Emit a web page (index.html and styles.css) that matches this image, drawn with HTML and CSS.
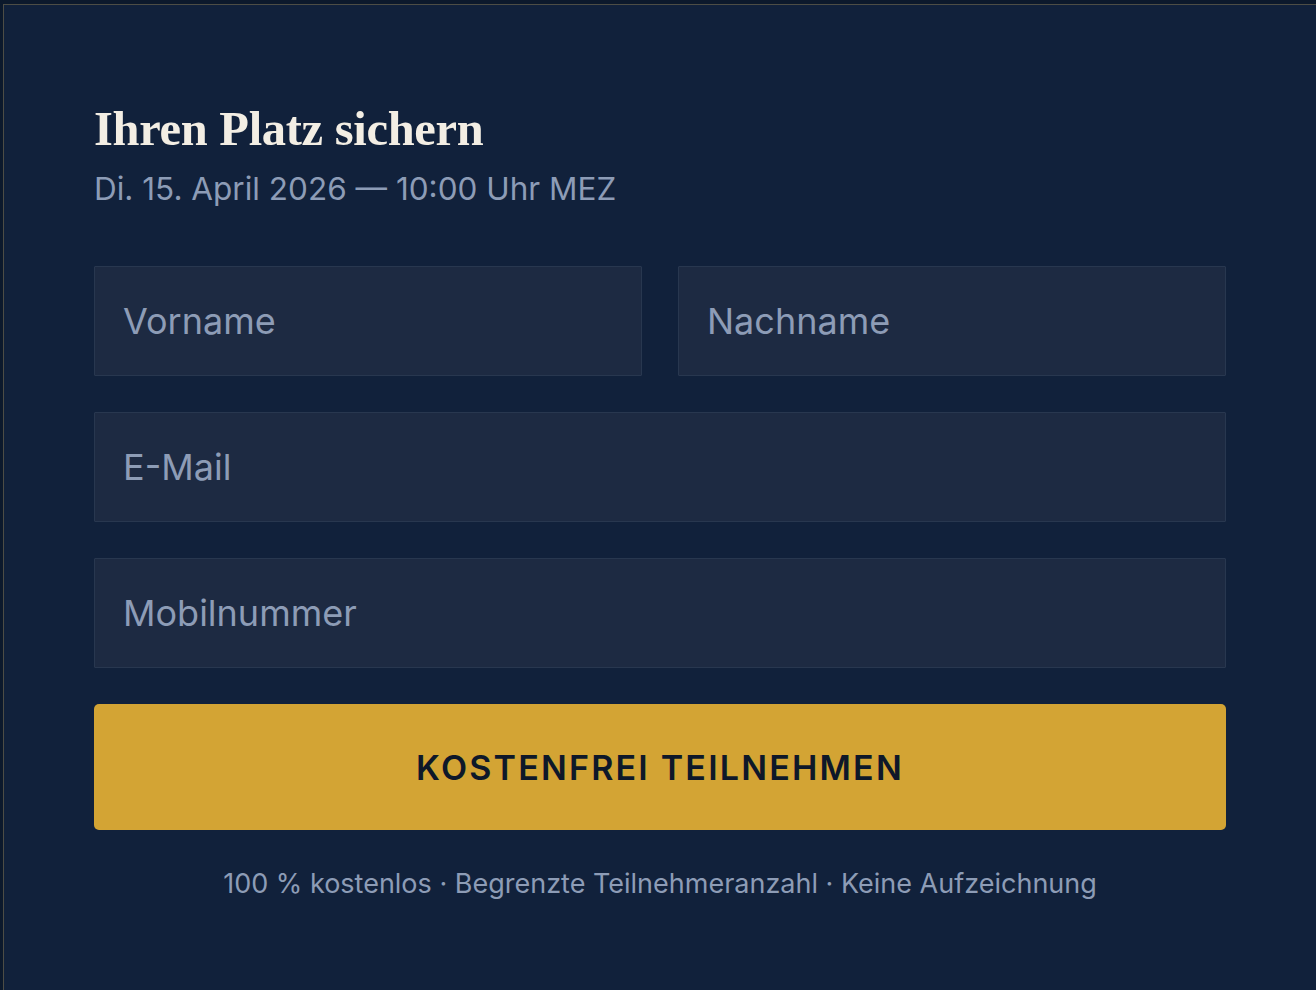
FILE: index.html
```html
<!DOCTYPE html>
<html lang="de">
<head>
<meta charset="utf-8">
<title>Ihren Platz sichern</title>
<link rel="stylesheet" href="styles.css">
</head>
<body>
<section class="card">
  <h2 class="title">Ihren Platz sichern</h2>
  <p class="date">Di. 15. April 2026 — 10:00 Uhr MEZ</p>
  <form class="form">
    <div class="row two">
      <input class="field" type="text" placeholder="Vorname">
      <input class="field" type="text" placeholder="Nachname">
    </div>
    <input class="field" type="email" placeholder="E-Mail">
    <input class="field" type="tel" placeholder="Mobilnummer">
    <button class="cta" type="button">KOSTENFREI TEILNEHMEN</button>
  </form>
  <p class="note">100 % kostenlos · Begrenzte Teilnehmeranzahl · Keine Aufzeichnung</p>
</section>
</body>
</html>
```

FILE: styles.css
```css
html, body {
  margin: 0;
  height: 100%;
}
body {
  background: #0c192c;
  padding: 4px 0 0 3px;
  box-sizing: border-box;
  overflow: hidden;
  font-family: Inter, "Noto Sans", sans-serif;
}
.card {
  width: 1314px;
  min-height: 1100px;
  box-sizing: border-box;
  background: #11213b;
  border: 1px solid #4d4d45;
  padding: 95px 90px 0 90px;
}
.title {
  margin: 0;
  font-family: "Liberation Serif", "DejaVu Serif", serif;
  font-weight: 700;
  font-size: 48.5px;
  line-height: 1.2;
  color: #f3eee4;
  letter-spacing: -0.3px;
}
.date {
  margin: 11px 0 0;
  font-size: 31.5px;
  line-height: 1.3;
  color: #8d9cb6;
}
.form {
  margin-top: 56px;
  display: flex;
  flex-direction: column;
  gap: 36px;
}
.row.two {
  display: grid;
  grid-template-columns: 1fr 1fr;
  gap: 36px;
}
.field {
  display: block;
  width: 100%;
  box-sizing: border-box;
  height: 110px;
  margin: 0;
  padding: 0 28px;
  background: #1d2a42;
  border: 1px solid #28374f;
  border-radius: 1px;
  font-family: Inter, sans-serif;
  font-size: 36px;
  color: #e5e9f0;
  outline: none;
}
.field::placeholder {
  color: #8d9cb6;
  opacity: 1;
}
.cta {
  height: 126px;
  border: none;
  border-radius: 5px;
  background: #d3a434;
  color: #0e1829;
  font-family: Inter, sans-serif;
  font-weight: 600;
  font-size: 34px;
  letter-spacing: 2.2px;
  cursor: pointer;
}
.note {
  margin: 36px 0 0;
  text-align: center;
  font-size: 27px;
  line-height: 1.3;
  color: #8d9cb6;
}
```
